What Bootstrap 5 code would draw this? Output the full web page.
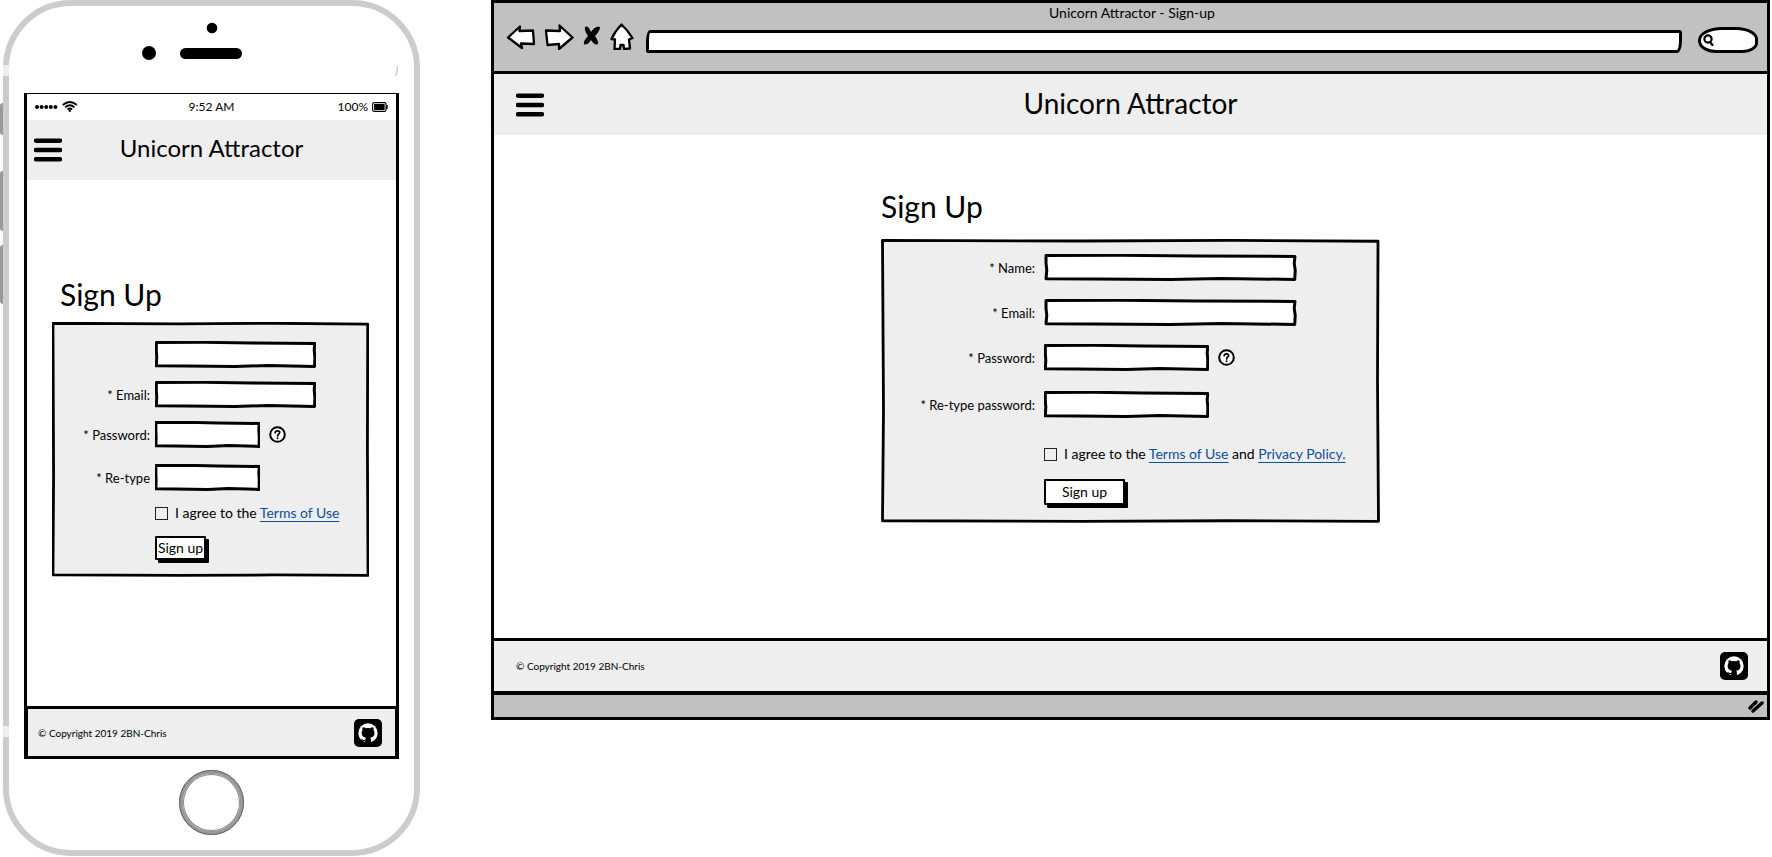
<!DOCTYPE html>
<html lang="en">
<head>
<meta charset="utf-8">
<meta name="viewport" content="width=device-width, initial-scale=1">
<title>Unicorn Attractor - Sign-up</title>
<link rel="stylesheet" href="https://cdn.jsdelivr.net/npm/bootstrap@5.3.0/dist/css/bootstrap.min.css">
<style>
  :root {
    --ink: #000;
    --panel: #eee;
    --chrome: #c1c1c1;
    --sketch-field: url("data:image/svg+xml,%3Csvg xmlns='http://www.w3.org/2000/svg' viewBox='0 0 100 100' preserveAspectRatio='none'%3E%3Cpath d='M.8 6 30 5 60 7 99.2 9 98.9 35 99.3 60 99.1 94 70 91 50 94 20 93 .8 92 1.1 60 .8 35Z' fill='white' stroke='black' stroke-width='3' stroke-linejoin='round' vector-effect='non-scaling-stroke'/%3E%3C/svg%3E");
    --sketch-panel: url("data:image/svg+xml,%3Csvg xmlns='http://www.w3.org/2000/svg' viewBox='0 0 100 100' preserveAspectRatio='none'%3E%3Cpath d='M.3 .5 40 .7 70 .5 99.6 .8 99.5 50 99.7 99.4 70 99.2 40 99.4 .3 99.2 .5 60Z' fill='%23eee' stroke='black' stroke-width='2.8' stroke-linejoin='round' vector-effect='non-scaling-stroke'/%3E%3C/svg%3E");
  }
  body { font-family: Lato, "Liberation Sans", sans-serif; font-size: 14px; line-height: 20px; color: var(--ink); background: #fff; }
  a { color: #0b4f9c; text-underline-offset: 3px; }
  svg { display: block; }
  button { color: var(--ink); }

  .bare { border: 0; padding: 0; background: none; }
  .app-head { background: var(--panel); min-height: 60px; display: grid; grid-template-columns: 1fr auto 1fr; align-items: center; }
  .app-title { font-size: 28px; line-height: 36px; margin: 0; padding-bottom: 4px; font-weight: 400; }
  .page-title { font-size: 30px; line-height: 34px; margin: 0; font-weight: 400; }
  .app-foot { border: 3px solid var(--ink); background: var(--panel); font-size: 10px; line-height: 16px; }

  .panel { background: var(--sketch-panel) 0 0 / 100% 100% no-repeat; }
  .line { display: flex; align-items: center; min-height: 27px; }
  .line > label:first-child, .line > .pad { flex: none; text-align: right; white-space: nowrap; font-size: 13px; }
  .field { border: 0; height: 27px; padding: 3px 6px; background: var(--sketch-field) 0 0 / 100% 100% no-repeat; }
  .tick { appearance: none; width: 13px; height: 13px; border: 1px solid #222; background: transparent; margin: 0 7px 0 0; flex: none; }
  .tick:checked { background: #222; }
  .agree { min-height: 20px; white-space: nowrap; }
  .send { background: #fff; border: 2px solid var(--ink); box-shadow: 3px 3px 0 var(--ink); line-height: 20px; border-radius: 1px; }
  .help { margin-left: 9px; }

  /* phone */
  .phone-wrap { flex: 0 0 491px; padding-left: 3px; }
  .phone { position: relative; width: 417px; border: 6px solid #ccc; border-radius: 68px; padding: 0 15px 15px; }
  .side { position: absolute; left: -9px; width: 3px; background: #999; border-radius: 3px 0 0 3px; }
  .band { position: absolute; left: -6px; width: 6px; height: 11px; background: #eee; }
  .speaker { display: block; margin: 0 auto; }
  .screen { border: 2px solid var(--ink); border-width: 1px 3px 0; }
  .status { height: 26px; font-size: 12px; display: grid; grid-template-columns: 1fr auto 1fr; align-items: center; padding: 0 8px; }
  .phone .app-head { padding: 0 7px; }
  .phone .app-title { font-size: 24px; }
  .phone main { padding: 97px 27px 129px 25px; }
  .phone .page-title { padding-left: 8px; margin-bottom: 11px; }
  .phone .panel { padding: 19px 3px 17px; }
  .phone .line > label:first-child, .phone .line > .pad { width: 95px; margin-right: 5px; }
  .phone .line { margin-bottom: 13px; }
  .phone .wide { width: 161px; }
  .phone .short { width: 105px; }
  .phone .send { padding: 0; width: 51px; height: 24px; }
  .phone .app-foot { border-width: 3px 1px; height: 53px; padding: 0 13px 0 10px; }
  .home { width: 65px; height: 65px; border-radius: 50%; border: 4px solid #999; background: #fff; margin: 11px auto 0; display: block; box-shadow: inset 0 0 0 1px #888; outline: 1px solid #666; outline-offset: -1px; }

  /* browser */
  .browser { flex: 1 1 0; min-width: 0; border: 3px solid var(--ink); margin: 0 2px 0 0; }
  .chrome-bar { background: var(--chrome); border-bottom: 3px solid var(--ink); padding: 0 9px 18px 12px; }
  .tab-title { text-align: center; line-height: 20px; }
  .tools { height: 30px; display: flex; }
  .address { flex: 1 1 0; min-width: 0; height: 23px; align-self: flex-end; border: 3px solid var(--ink); border-radius: 4px 3px 5px 2px / 12px 3px 12px 2px; background: #fff; }
  .find { width: 60px; height: 26px; align-self: flex-end; border: 3px solid var(--ink); border-radius: 24px 22px 16px 18px / 13px 12px 10px 12px; background: #fff; padding-left: 2px; }
  .find input { width: 100%; min-width: 0; border: 0; background: none; padding: 0; height: 16px; font-size: 12px; }
  .browser .app-head { padding: 0 22px; min-height: 61px; }
  .browser main { padding: 54px 16px 115px; }
  .sheet { width: 499px; max-width: 100%; margin: 0 auto; }
  .browser .page-title { margin-bottom: 16px; }
  .browser .panel { padding: 15px 3px 18px; }
  .browser .line { margin-bottom: 18px; }
  .browser .line > label:first-child, .browser .line > .pad { width: 151px; margin-right: 9px; }
  .browser .wide { width: 253px; }
  .browser .short { width: 165px; }
  .browser .send { width: 81px; height: 26px; padding: 0; }
  .browser .app-foot { border-width: 3px 0 4px; height: 57px; padding: 0 19px 0 22px; }
  .grip { background: var(--chrome); height: 22px; display: flex; justify-content: flex-end; align-items: center; padding-right: 3px; }
  .phone .line.retype { margin: 16px 0 12px; }
  .browser .line.retype { margin: 20px 0 26px; }
  .browser .line.agree { margin-bottom: 15px; }
  .line.agree { min-height: 20px; }
  .phone .line.last, .browser .line.last { margin-bottom: 0; min-height: 24px; }
</style>
</head>
<body>
<svg width="0" height="0" class="position-absolute" aria-hidden="true">
  <symbol id="burger" viewBox="0 0 28 24"><path d="M2 2.700H26M2 12H26M2 21.300H26" stroke="#000" stroke-width="4.400" stroke-linecap="round"/></symbol>
  <symbol id="github" viewBox="0 0 28 28">
    <rect width="28" height="28" rx="5"/>
    <circle cx="14" cy="14" r="9.700" fill="#fff"/>
    <path d="M8.700 8.200q2 .1 3.200 1.100a10 10 0 0 1 4.200 0q1.300-1 3.200-1.100.7 1.500.2 2.800 1 1.200 1 3c0 3.300-1.900 4.300-4.400 4.600.7.600.8 1.400.8 2.300V25H11.200v-2.700c-2.500.3-3.300-1.300-4.200-2.300 1.900-.3 2.200 1.400 4.200 1 .1-1 .3-1.700.8-2.300-2.500-.4-4.400-1.600-4.400-4.700q0-1.800 1-3-.5-1.300.1-2.800Z"/>
  </symbol>
  <symbol id="question" viewBox="0 0 17 17"><circle cx="8.500" cy="8.500" r="7.300" fill="#fff" stroke="#000" stroke-width="2"/><path d="M6.200 6.800q.1-2 2.300-2 2.200 0 2.200 1.700 0 1-1.200 1.700-.9.600-.9 1.700" fill="none" stroke="#000" stroke-width="1.700" stroke-linecap="round"/><circle cx="8.500" cy="12.300" r="1"/></symbol>
</svg>

<div class="d-flex align-items-start">
  <section class="phone-wrap" aria-label="Phone view">
    <div class="phone">
      <i class="side" style="top:97px;height:32px"></i>
      <i class="side" style="top:165px;height:60px"></i>
      <i class="side" style="top:239px;height:59px"></i>
      <i class="band" style="top:59px"></i>
      <i class="band" style="top:720px"></i>
      <svg class="speaker" width="376" height="87" viewBox="0 0 376 87" aria-hidden="true">
        <circle cx="188" cy="22" r="5.300"/><circle cx="125" cy="47" r="7"/><rect x="156" y="42" width="62" height="11" rx="5.500"/>
        <path d="M373.500 60q0 6-2 10" stroke="#ccc" stroke-width="1.500" fill="none"/>
      </svg>
      <div class="screen">
        <div class="status">
          <svg width="44" height="14" viewBox="0 0 44 14" aria-hidden="true">
            <g><circle cx="2" cy="7" r="2"/><circle cx="6.600" cy="7" r="2"/><circle cx="11.200" cy="7" r="2"/><circle cx="15.800" cy="7" r="2"/><circle cx="20.400" cy="7" r="2"/></g>
            <g fill="none" stroke="#000" stroke-width="1.900"><path d="M27.800 5q7-6 14 0M30.200 7.300q4.600-4 9.200 0M32.500 9.500q2.300-2 4.600 0"/></g><circle cx="34.800" cy="10.800" r="1.200"/>
          </svg>
          <span>9:52 AM</span>
          <span class="d-flex justify-content-end align-items-center gap-1">100%
            <svg width="16" height="10" viewBox="0 0 16 10" aria-hidden="true"><rect x=".6" y=".6" width="13.400" height="8.800" rx="1.500" fill="none" stroke="#000" stroke-width="1.100"/><rect x="2" y="2" width="10.600" height="6"/><path d="M15 3v4" stroke="#000" stroke-width="1.400"/></svg></span>
        </div>
        <header class="app-head">
          <button class="bare text-start" type="button" aria-label="Menu"><svg width="28" height="24"><use href="#burger"/></svg></button>
          <h1 class="app-title">Unicorn Attractor</h1><span></span>
        </header>
        <main>
          <h2 class="page-title">Sign Up</h2>
          <form class="panel">
            <div class="line"><span class="pad"></span><input class="field wide" type="text" aria-label="Name"></div>
            <div class="line"><label for="m-email">* Email:</label><input class="field wide" type="email" id="m-email"></div>
            <div class="line"><label for="m-pass">* Password:</label><input class="field short" type="password" id="m-pass"><button class="bare help" type="button" aria-label="Help"><svg width="17" height="17"><use href="#question"/></svg></button></div>
            <div class="line retype"><label for="m-again">* Re-type</label><input class="field short" type="password" id="m-again"></div>
            <div class="line agree"><span class="pad"></span><input class="tick" type="checkbox" id="m-agree"><span><label for="m-agree">I agree to the</label> <a href="#">Terms of Use</a></span></div>
            <div class="line last"><span class="pad"></span><button class="send" type="button">Sign up</button></div>
          </form>
        </main>
        <footer class="app-foot d-flex justify-content-between align-items-center">
          <span>© Copyright 2019 2BN-Chris</span>
          <a href="#" aria-label="GitHub"><svg width="28" height="28" fill="#000"><use href="#github"/></svg></a>
        </footer>
      </div>
      <button class="home" type="button" aria-label="Home"></button>
    </div>
  </section>

  <section class="browser" aria-label="Browser view">
    <div class="chrome-bar">
      <div class="tab-title">Unicorn Attractor - Sign-up</div>
      <div class="tools">
        <button class="bare me-2 align-self-start" type="button" aria-label="Back"><svg width="30" height="27" viewBox="0 0 30 27"><path d="M2 14.500 14 3.500 13.500 8 27 7.500 28 21 15 20.500 16 25Z" fill="#fff" stroke="#000" stroke-width="2.300" stroke-linejoin="round"/></svg></button>
        <button class="bare me-2 align-self-start" type="button" aria-label="Forward"><svg width="30" height="27" viewBox="0 0 30 27"><path d="M2 7.500 16 8 15.500 2.500 28.500 14.500 15 26 15 21 3.500 22Z" fill="#fff" stroke="#000" stroke-width="2.300" stroke-linejoin="round"/></svg></button>
        <button class="bare me-2 align-self-start" type="button" aria-label="Stop"><svg width="20" height="27" viewBox="0 0 20 27"><path d="M3 4Q6 2 9 9 13 3 18 4 18 8 13 13 17 19 16 21 13 23 9 17 6 22 2 21.500 1 18 6 13 2 7 3 4Z"/></svg></button>
        <button class="bare me-2 align-self-start" type="button" aria-label="Home page"><svg width="24" height="27" viewBox="0 0 24 27"><path d="M11.500 1.500Q17 6.500 22.500 15L19 16.500 20 25.500 14 26 13.500 22 10.500 22 10 26 4.500 26 5 16.500 1.500 16Q5 8 11.500 1.500Z" fill="#fff" stroke="#000" stroke-width="2.300" stroke-linejoin="round"/></svg></button>
        <input class="address ms-1 me-3" type="text" aria-label="Address">
        <div class="find d-flex align-items-center">
          <svg class="flex-shrink-0" width="12" height="12" viewBox="0 0 12 12" aria-hidden="true"><circle cx="5" cy="5" r="3.600" fill="none" stroke="#000" stroke-width="2.200"/><path d="M7 8 9.500 11" stroke="#000" stroke-width="2.200" stroke-linecap="round"/></svg>
          <input type="text" aria-label="Search">
        </div>
      </div>
    </div>
    <header class="app-head">
      <button class="bare text-start" type="button" aria-label="Menu"><svg width="28" height="24"><use href="#burger"/></svg></button>
      <h1 class="app-title">Unicorn Attractor</h1><span></span>
    </header>
    <main>
      <div class="sheet">
        <h2 class="page-title">Sign Up</h2>
        <form class="panel">
          <div class="line"><label for="name">* Name:</label><input class="field wide" type="text" id="name"></div>
          <div class="line"><label for="email">* Email:</label><input class="field wide" type="email" id="email"></div>
          <div class="line"><label for="pass">* Password:</label><input class="field short" type="password" id="pass"><button class="bare help" type="button" aria-label="Help"><svg width="17" height="17"><use href="#question"/></svg></button></div>
          <div class="line retype"><label for="again">* Re-type password:</label><input class="field short" type="password" id="again"></div>
          <div class="line agree"><span class="pad"></span><input class="tick" type="checkbox" id="agree"><span><label for="agree">I agree to the</label> <a href="#">Terms of Use</a> and <a href="#">Privacy Policy.</a></span></div>
          <div class="line last"><span class="pad"></span><button class="send" type="button">Sign up</button></div>
        </form>
      </div>
    </main>
    <footer class="app-foot d-flex justify-content-between align-items-center">
      <span>© Copyright 2019 2BN-Chris</span>
      <a href="#" aria-label="GitHub"><svg width="28" height="28" fill="#000"><use href="#github"/></svg></a>
    </footer>
    <div class="grip"><svg width="16" height="14" viewBox="0 0 16 14" aria-hidden="true"><path d="M2 9 8 3M5 12 14 4" stroke="#000" stroke-width="3.400" stroke-linecap="round"/></svg></div>
  </section>
</div>
<script src="https://cdn.jsdelivr.net/npm/bootstrap@5.3.0/dist/js/bootstrap.bundle.min.js"></script>
</body>
</html>
